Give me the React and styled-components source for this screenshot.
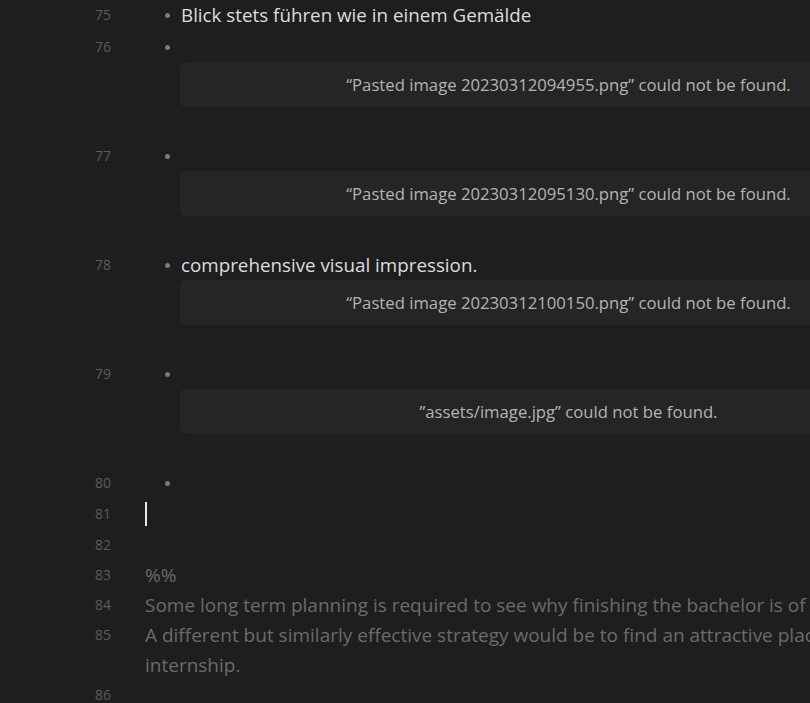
import React from "react";
import styled, { createGlobalStyle } from "styled-components";

const Global = createGlobalStyle`
  html, body { margin: 0; padding: 0; background: #1e1e1e; overflow: hidden; }
  body { width: 810px; height: 703px; font-family: "Open Sans", "Noto Sans", sans-serif; }
`;

const Editor = styled.div`
  display: flex;
  flex-direction: column;
  width: 810px;
  height: 703px;
  overflow: hidden;
  padding-top: ${(p) => p.$top}px;
  box-sizing: border-box;
`;

const Row = styled.div`
  display: flex;
  align-items: flex-start;
  margin-bottom: ${(p) => p.$after || 0}px;
  flex-shrink: 0;
`;

const Gutter = styled.div`
  width: 111px;
  flex-shrink: 0;
  text-align: right;
  font-size: 14px;
  line-height: 30px;
  color: #5c5c5c;
  margin-right: 34px;
`;

const Content = styled.div`
  flex: 1;
  min-width: 0;
  display: flex;
  flex-direction: column;
`;

const ItemLine = styled.div`
  display: flex;
  align-items: center;
  height: 30px;
  font-size: 18.8px;
  color: #dcddde;
  white-space: nowrap;
`;

const Bullet = styled.span`
  width: 36px;
  flex-shrink: 0;
  display: flex;
  align-items: center;
  &::before {
    content: "";
    display: block;
    width: 5px;
    height: 5px;
    border-radius: 50%;
    background: #7a7a7a;
    margin-left: 20px;
  }
`;

const Embed = styled.div`
  margin-left: 35px;
  width: 777px;
  height: 45px;
  flex-shrink: 0;
  border-radius: 6px;
  background: #252525;
  display: flex;
  align-items: center;
  justify-content: center;
  color: #b4b4b4;
  font-size: 16.7px;
  white-space: nowrap;
`;

const Para = styled.div`
  font-size: 19px;
  line-height: 30px;
  color: #6b6b6b;
  white-space: ${(p) => (p.$nowrap ? "nowrap" : "normal")};
  min-height: 30px;
  display: flex;
  align-items: center;
`;

const Caret = styled.span`
  display: block;
  width: 2px;
  height: 24px;
  background: #e6e6e6;
`;

const items = [
  { n: 75, text: "Blick stets führen wie in einem Gemälde", after: 2 },
  { n: 76, text: "", embed: "“Pasted image 20230312094955.png” could not be found.", after: 34 },
  { n: 77, text: "", embed: "“Pasted image 20230312095130.png” could not be found.", after: 34 },
  { n: 78, text: "comprehensive visual impression.", embed: "“Pasted image 20230312100150.png” could not be found.", after: 34 },
  { n: 79, text: "", embed: "”assets/image.jpg” could not be found.", after: 34 },
  { n: 80, text: "", after: 1 },
];

export default function App() {
  return (
    <>
      <Global />
      <Editor $top={-5}>
        {items.map((it) => (
          <Row key={it.n} $after={it.after}>
            <Gutter>{it.n}</Gutter>
            <Content>
              <ItemLine>
                <Bullet />
                {it.text}
              </ItemLine>
              {it.embed && <Embed>{it.embed}</Embed>}
            </Content>
          </Row>
        ))}
        <Row $after={1}>
          <Gutter>81</Gutter>
          <Content>
            <Para>
              <Caret />
            </Para>
          </Content>
        </Row>
        <Row>
          <Gutter>82</Gutter>
          <Content>
            <Para />
          </Content>
        </Row>
        <Row>
          <Gutter>83</Gutter>
          <Content>
            <Para>%%</Para>
          </Content>
        </Row>
        <Row>
          <Gutter>84</Gutter>
          <Content>
            <Para $nowrap>Some long term planning is required to see why finishing the bachelor is of</Para>
          </Content>
        </Row>
        <Row>
          <Gutter>85</Gutter>
          <Content>
            <Para $nowrap>A different but similarly effective strategy would be to find an attractive place</Para>
            <Para>internship.</Para>
          </Content>
        </Row>
        <Row>
          <Gutter>86</Gutter>
          <Content>
            <Para />
          </Content>
        </Row>
      </Editor>
    </>
  );
}
